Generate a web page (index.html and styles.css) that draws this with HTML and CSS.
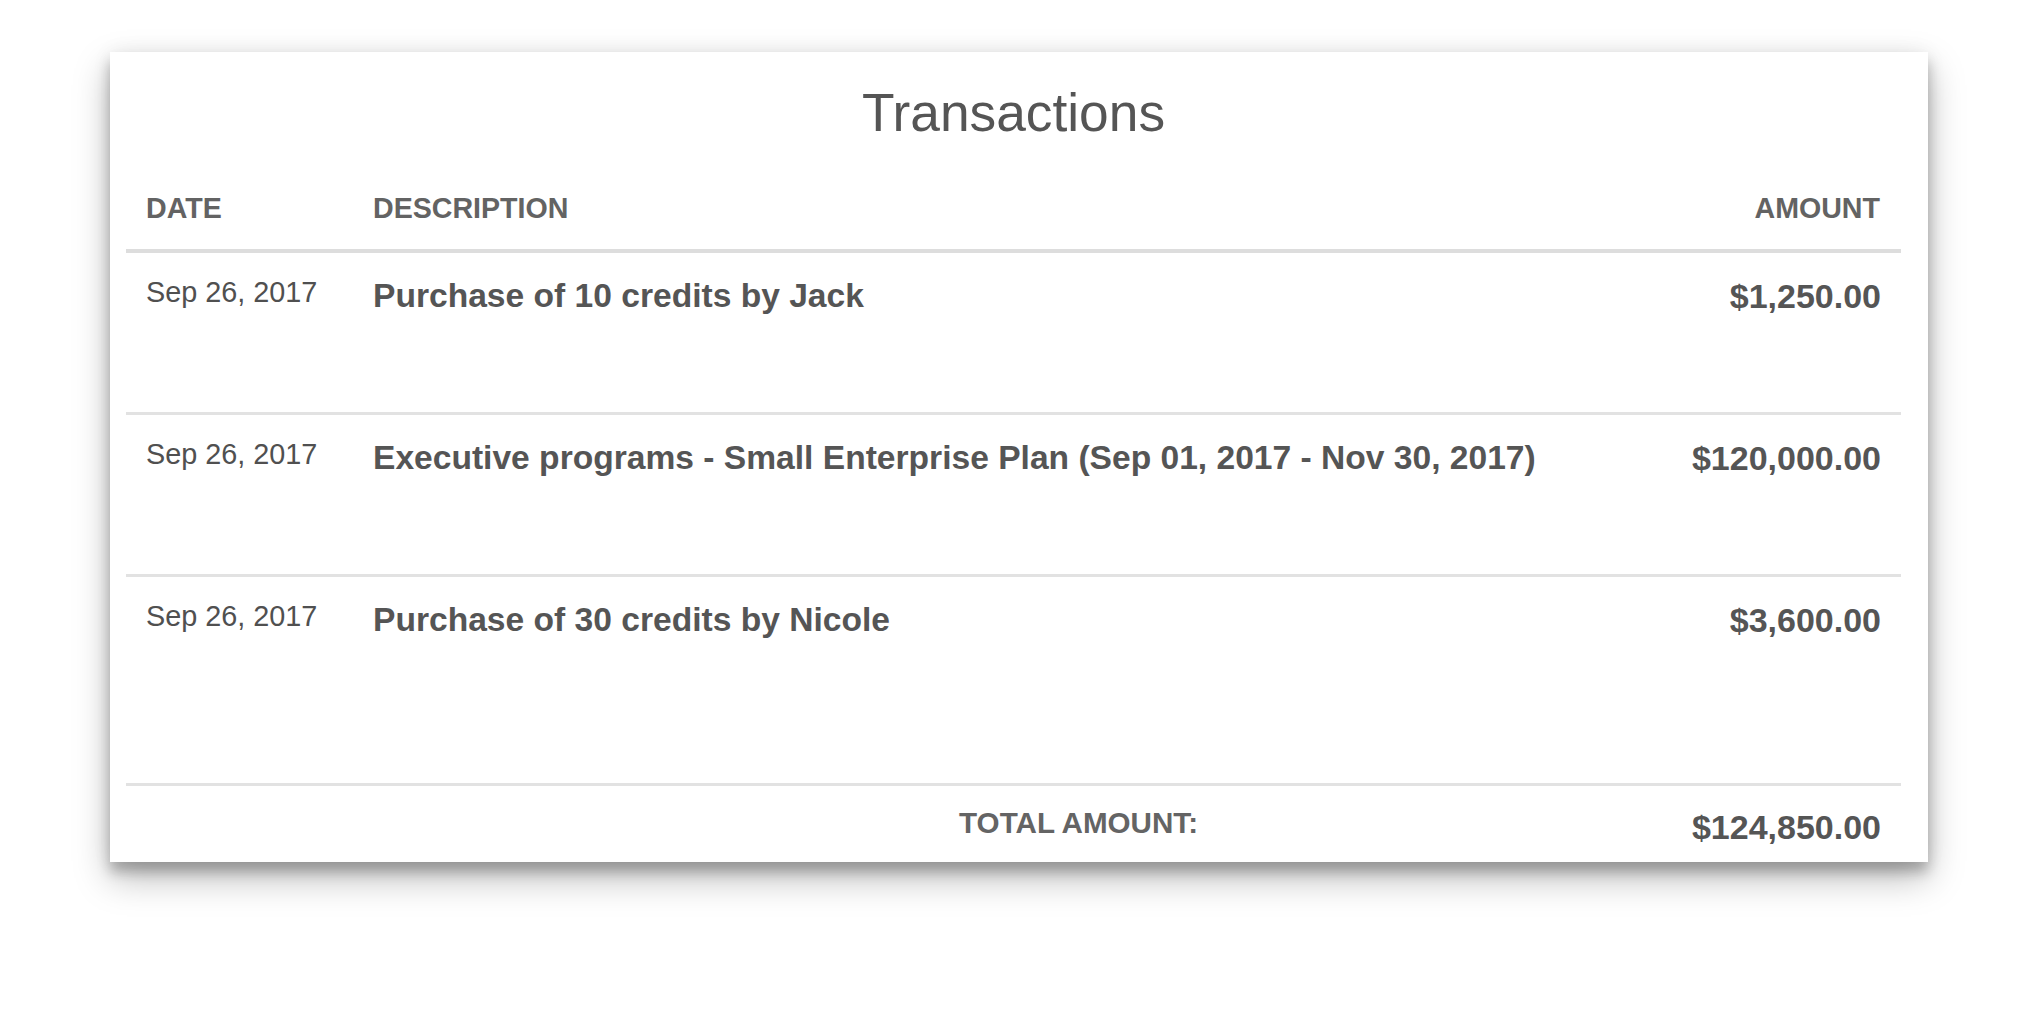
FILE: index.html
```html
<!DOCTYPE html>
<html lang="en">
<head>
<meta charset="utf-8">
<title>Transactions</title>
<link rel="stylesheet" href="styles.css">
</head>
<body>
<div class="card">
  <h1 class="title">Transactions</h1>
  <table class="tx">
    <colgroup>
      <col class="c-date">
      <col class="c-desc">
      <col class="c-amt">
    </colgroup>
    <thead>
      <tr>
        <th class="h-date">Date</th>
        <th class="h-desc">Description</th>
        <th class="h-amt">Amount</th>
      </tr>
    </thead>
    <tbody>
      <tr>
        <td class="date">Sep 26, 2017</td>
        <td class="desc">Purchase of 10 credits by Jack</td>
        <td class="amt">$1,250.00</td>
      </tr>
      <tr>
        <td class="date">Sep 26, 2017</td>
        <td class="desc">Executive programs - Small Enterprise Plan (Sep 01, 2017 - Nov 30, 2017)</td>
        <td class="amt">$120,000.00</td>
      </tr>
      <tr class="last">
        <td class="date">Sep 26, 2017</td>
        <td class="desc">Purchase of 30 credits by Nicole</td>
        <td class="amt">$3,600.00</td>
      </tr>
    </tbody>
    <tfoot>
      <tr>
        <td class="total-label" colspan="2">Total amount:</td>
        <td class="total-amt">$124,850.00</td>
      </tr>
    </tfoot>
  </table>
</div>
</body>
</html>
```
FILE: styles.css
```css
html, body {
  margin: 0;
  padding: 0;
  background: #ffffff;
}

body {
  min-height: 1023px;
  padding-top: 52px;
  box-sizing: border-box;
  font-family: "Liberation Sans", Arial, Helvetica, sans-serif;
  color: #555555;
}

.card {
  box-sizing: border-box;
  width: 1818px;
  margin: 0 0 0 110px;
  padding: 30px 27px 0 16px;
  background: #ffffff;
  box-shadow: 0 16px 34px rgba(0, 0, 0, 0.27), 0 10px 12px rgba(0, 0, 0, 0.22), 0 0 20px rgba(0, 0, 0, 0.06);
}

.title {
  margin: 0;
  font-size: 53.3px;
  line-height: 61px;
  font-weight: normal;
  text-align: center;
  color: #555555;
}

.tx {
  width: 100%;
  border-collapse: collapse;
  table-layout: fixed;
}

.c-date { width: 227px; }
.c-amt { width: 320px; }

.tx th {
  padding: 49px 0 25px 20px;
  font-size: 28.6px;
  line-height: 32px;
  font-weight: bold;
  text-transform: uppercase;
  text-align: left;
  color: #636363;
  border-bottom: 4px solid #dddddd;
}

.tx th.h-amt {
  text-align: right;
  padding-right: 21px;
}

.tx tbody td {
  vertical-align: top;
  padding: 23px 0 96px 20px;
  border-bottom: 3px solid #e2e2e2;
}

.tx tbody tr.last td {
  padding-bottom: 143px;
}

.date {
  font-size: 28.8px;
  line-height: 32px;
  color: #505050;
}

.desc {
  font-size: 33.6px;
  line-height: 40px;
  font-weight: bold;
  color: #555555;
}

.amt {
  font-size: 34px;
  line-height: 40px;
  font-weight: bold;
  text-align: right;
  color: #555555;
}

.tx tbody td.amt {
  padding-right: 20px;
}

.tx tfoot td {
  vertical-align: top;
  padding: 21px 0 15px 20px;
}

.tx tfoot td.total-label {
  font-size: 29.6px;
  line-height: 32px;
  font-weight: bold;
  text-transform: uppercase;
  text-align: right;
  padding-right: 383px;
  color: #646464;
}

.tx tfoot td.total-amt {
  font-size: 34px;
  line-height: 40px;
  font-weight: bold;
  text-align: right;
  padding-right: 20px;
  color: #555555;
}
```
